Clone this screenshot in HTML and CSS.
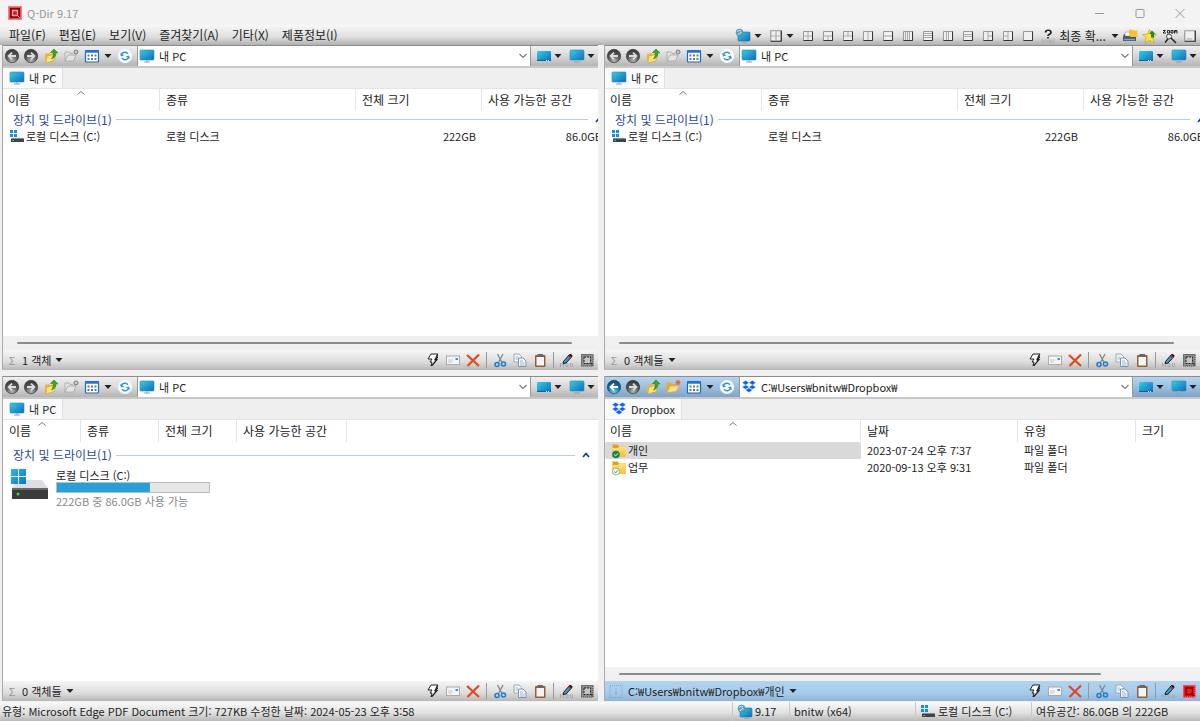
FILE: index.html
```
<!DOCTYPE html>
<html lang="ko">
<head>
<meta charset="utf-8">
<title>Q-Dir 9.17</title>
<link rel="stylesheet" href="styles.css">
</head>
<body>
<svg class="sprite" aria-hidden="true">
  <defs>
    <linearGradient id="gScreen" x1="0" y1="0" x2="1" y2="1"><stop offset="0" stop-color="#35d0e0"/><stop offset="1" stop-color="#0b6cc4"/></linearGradient>
    <radialGradient id="gBall" cx=".5" cy=".85" r=".9"><stop offset="0" stop-color="#b5b5b5"/><stop offset=".5" stop-color="#555"/><stop offset="1" stop-color="#333"/></radialGradient>
    <radialGradient id="gBallBlue" cx=".5" cy=".85" r=".9"><stop offset="0" stop-color="#6fd0f5"/><stop offset=".5" stop-color="#1f6f9f"/><stop offset="1" stop-color="#1c3a58"/></radialGradient>
    <linearGradient id="gWin" x1="0" y1="0" x2="1" y2="1"><stop offset="0" stop-color="#2fb4ee"/><stop offset="1" stop-color="#0a78d0"/></linearGradient>
    <linearGradient id="gFolder" x1="0" y1="0" x2="0" y2="1"><stop offset="0" stop-color="#ffe08a"/><stop offset="1" stop-color="#fbc02d"/></linearGradient>
  </defs>
  <symbol id="monitor" viewBox="0 0 16 16"><rect x="1" y="2" width="14" height="10" rx="1" fill="url(#gScreen)" stroke="#2d87a8" stroke-width=".6"/><path d="M7 12.3h2v1.4H7z" fill="#aab6bd"/><path d="M5 14h6" stroke="#8da0ab"/></symbol>
  <symbol id="desk" viewBox="0 0 16 16"><rect x="1" y="3" width="14" height="10" rx="1" fill="url(#gScreen)"/><path d="M1 12.5h14" stroke="#145e99"/><path d="M10 12.5h4" stroke="#cfe" stroke-dasharray="1 1"/></symbol>
  <symbol id="qmon" viewBox="0 0 16 16"><rect x="3" y="4" width="12" height="9" rx="1" fill="url(#gScreen)" stroke="#256f98" stroke-width=".6"/><path d="M7 14.5h5" stroke="#9aa"/><circle cx="4.500" cy="4.500" r="3.500" fill="#5aa7cc" stroke="#3d7d9e" stroke-width=".5"/><path d="M2 3.500c2-2 3 0 4-1M3 7c0-2 3-1 3-3" stroke="#d5edf7" fill="none"/></symbol>
  <symbol id="back" viewBox="0 0 16 16"><circle cx="8" cy="8" r="6.700" fill="url(#gBall)" stroke="#333" stroke-width=".6"/><path d="M12 8H5M8 4.700 4.600 8 8 11.300" stroke="#ddd" stroke-width="1.800" fill="none"/></symbol>
  <symbol id="backblue" viewBox="0 0 16 16"><circle cx="8" cy="8" r="6.700" fill="url(#gBallBlue)" stroke="#1c3a58" stroke-width=".6"/><path d="M12 8H5M8 4.700 4.600 8 8 11.300" stroke="#fff" stroke-width="1.800" fill="none"/></symbol>
  <symbol id="fwd" viewBox="0 0 16 16"><circle cx="8" cy="8" r="6.700" fill="url(#gBall)" stroke="#333" stroke-width=".6"/><path d="M4 8h7M8 4.700 11.400 8 8 11.300" stroke="#ddd" stroke-width="1.800" fill="none"/></symbol>
  <symbol id="up" viewBox="0 0 16 16"><path d="M2 6l4-1 1 1 5-1v7l-8 3-2-1z" fill="#e9b93a"/><path d="M4 8l9-2-2 6.500L3 15z" fill="#ffe37a" stroke="#c89a28" stroke-width=".5"/><path d="M8.500 11c1.500-2 2-4 1.800-6.500H7.500L11 1l4 4-2.200-.2c.2 3-1 5-4.300 6.200z" fill="#3da51e" stroke="#1f7010" stroke-width=".5"/></symbol>
  <symbol id="newfolder" viewBox="0 0 16 16"><path d="M2 13V4h4l1 1.500h3M2 13l3-6h8l-2.500 6z" fill="#e4e4e4" stroke="#aaa" stroke-width=".9"/><circle cx="13" cy="4" r="2" fill="#ccc" stroke="#777"/></symbol>
  <symbol id="newfoldercolor" viewBox="0 0 16 16"><path d="M1.500 13V3.500h4L7 5h4v2z" fill="#e4ab31"/><path d="M2 13.500 5 7h9l-3 5.500z" fill="#ffe184" stroke="#d9a436" stroke-width=".6"/><path d="M13 1v5M10.500 3.500h5M11.200 1.700l3.600 3.600M14.800 1.700l-3.600 3.600" stroke="#ed6331" stroke-width="1.200"/></symbol>
  <symbol id="views" viewBox="0 0 16 16"><rect x="1.500" y="2.500" width="13" height="11.500" rx="1" fill="#fff" stroke="#1b68bd" stroke-width="1.200"/><path d="M1 3.500h14" stroke="#2277d2" stroke-width="2.500"/><g stroke-width="2" stroke-dasharray="2 1.500"><path d="M4.500 6.500v7" stroke="#477fbd"/><path d="M8 6.500v7" stroke="#9a5b89"/><path d="M11.500 6.500v7" stroke="#3c9a65"/></g></symbol>
  <symbol id="refresh" viewBox="0 0 16 16"><circle cx="8" cy="8" r="7" fill="#fafcff"/><path d="M4.300 7C5 4 9 3.200 11 5.700M11.700 9C11 12 7 12.800 5 10.300" fill="none" stroke="#2e93dc" stroke-width="1.400"/><path d="M3 5l1 3.500L7.200 7.500zM13 11l-1-3.500L8.800 8.500z" fill="#2e93dc"/></symbol>
  <symbol id="caret" viewBox="0 0 8 6"><path d="M.5 1h7L4 5z" fill="#222"/></symbol>
  <symbol id="chev" viewBox="0 0 10 8"><path d="M1.500 2 5 5.500 8.500 2" fill="none" stroke="#777" stroke-width="1.100"/></symbol>
  <symbol id="sort" viewBox="0 0 10 6"><path d="M1.500 4.500 5 1.500l3.500 3" fill="none" stroke="#777"/></symbol>
  <symbol id="collapse" viewBox="0 0 8 6"><path d="M1 5 4 1.500 7 5" fill="none" stroke="#123a9c" stroke-width="1.700"/></symbol>
  <symbol id="drive" viewBox="0 0 16 16"><path d="M1 1h3v3H1zM5 1h3v3H5zM1 5h3v3H1zM5 5h3v3H5z" fill="#1192de"/><path d="M4 8.500h9.500l1 1.500H3z" fill="#d4d7da"/><path d="M2 9.500h13v3.500H2z" fill="#3e4347"/><path d="M3.500 11.500H5" stroke="#4fe04f"/></symbol>
  <symbol id="bigdrive" viewBox="0 0 38 32"><path d="M8 12h23l6 8H1z" fill="#dcdee1"/><path d="M1 20h36v11H1z" fill="#3b3b3b"/><path d="M1 20h36v2H1z" fill="#686868"/><circle cx="7" cy="26" r="1.500" fill="#35e035"/><path d="M0 1h7v7H0zM8 1h7v7H8zM0 9h7v7H0zM8 9h7v7H8z" fill="url(#gWin)"/></symbol>
  <symbol id="bolt" viewBox="0 0 16 16"><path d="M6 2h7l-2 3h2l-3 3h2l-6 6 1-4H5l2-3H3z" fill="#fff" stroke="#222" stroke-linejoin="round"/><path d="M12.500 3 10 7.500h2L7 13.500" fill="none" stroke="#222" stroke-width="1.300"/></symbol>
  <symbol id="mail" viewBox="0 0 16 16"><rect x="1.500" y="4" width="13" height="8.500" fill="#f5f5f5" stroke="#aaa"/><path d="M3 8h5M3 10h4" stroke="#bbb" stroke-width=".8"/><path d="M10.500 7h2.500" stroke="#3b8fdc" stroke-width="2"/></symbol>
  <symbol id="del" viewBox="0 0 16 16"><path d="M2 3l12 11M14 2.500 2.500 14" stroke="#dd4a22" stroke-width="2.200"/></symbol>
  <symbol id="cut" viewBox="0 0 16 16"><path d="M5.500 2 10 10.500M11 2 6.500 10.500" stroke="#7d8994" stroke-width="1.300"/><circle cx="5" cy="12.500" r="2" fill="none" stroke="#1e7fd0" stroke-width="1.600"/><circle cx="11.500" cy="12" r="2" fill="none" stroke="#1e7fd0" stroke-width="1.600"/></symbol>
  <symbol id="copy" viewBox="0 0 16 16"><path d="M2 2h5l2.500 2.500V10H2z" fill="#f5f8fb" stroke="#98a8b8"/><path d="M6.500 6H11l3 3v5.500H6.500z" fill="#f5f8fb" stroke="#8193a8"/><path d="M8 9h3M8 11h4.500M8 13h4.500M3.500 5H6M3.500 7H6" stroke="#7ea6cf" stroke-width=".8"/></symbol>
  <symbol id="paste" viewBox="0 0 16 16"><rect x="3" y="3" width="10.500" height="12" rx="1" fill="#94602f"/><path d="M4.500 5h7.500v8.500H4.500z" fill="#f4f4f4"/><path d="M5.500 2h5.500v2.500H5.500z" fill="#62686e"/></symbol>
  <symbol id="pen" viewBox="0 0 16 16"><path d="M1.500 11v4M1.500 13h3M4.500 11v4M7 11.500h2v3H7zM11.500 11v3.500h2V11" stroke="#aaa" fill="none"/><path d="M4.500 9.500 10.500 2.500l2.500 2L7 11l-3 .5z" fill="#3aa0c8" stroke="#151515"/><path d="M10 4 12 5.500" stroke="#e12222" stroke-width="2.400"/><path d="m11 2.500 2 1.700" stroke="#151515" stroke-width="1.800"/></symbol>
  <symbol id="sel" viewBox="0 0 16 16"><rect x="2" y="2" width="12.500" height="12.500" fill="#8c8c8c"/><rect x="2.500" y="2.500" width="11.500" height="11.500" fill="none" stroke="#555" stroke-dasharray="1 1"/><rect x="5" y="5" width="6.500" height="6.500" fill="#c5c5c5" stroke="#222" stroke-dasharray="2 1"/><path d="M11 11h2.500v2.500z" fill="#333"/></symbol>
  <symbol id="selred" viewBox="0 0 16 16"><rect x="2" y="2" width="12.500" height="12.500" fill="#f51616"/><rect x="2.500" y="2.500" width="11.500" height="11.500" fill="none" stroke="#ff7a7a" stroke-dasharray="1 1"/><path d="M5 5h6.500v6.500H5zM10 10l3 3" fill="none" stroke="#7a0000" stroke-width="1.300"/></symbol>
  <symbol id="app" viewBox="0 0 14 14"><rect x=".5" y=".5" width="13" height="13" fill="#f24a4a" stroke="#e88" /><rect x="2" y="2" width="10" height="10" fill="#7c0c14"/><path d="M4.500 4.500h5v5h-5z" fill="#c8202a" stroke="#f99" stroke-width="1.300"/><path d="m9 9 3 3" stroke="#f99"/></symbol>
  <symbol id="dropbox" viewBox="0 0 16 16"><path d="M4.600 1.500 8 3.700 4.600 5.900 1.200 3.700zM11.400 1.500l3.400 2.200-3.400 2.200L8 3.700zM4.600 5.900 8 8.100l-3.400 2.200-3.400-2.200zM11.400 5.900l3.400 2.200-3.400 2.200L8 8.100zM4.600 11.100 8 8.900l3.400 2.200L8 13.500z" fill="#0f62f5" stroke="#fafafa" stroke-width=".2"/></symbol>
  <symbol id="folderok" viewBox="0 0 16 16"><path d="M1.500 1.500h5l1.500 2h7V14h-13.500z" fill="#e9a20c"/><path d="M1.500 5h5.500l1.500-1.500H15V14H1.500z" fill="url(#gFolder)"/><circle cx="5" cy="11.500" r="3.800" fill="#0f8a4a"/><path d="m3.200 11.500 1.400 1.400 2.300-2.500" fill="none" stroke="#fff"/></symbol>
  <symbol id="foldersync" viewBox="0 0 16 16"><path d="M1.500 1.500h5l1.500 2h7V14h-13.500z" fill="#e9a20c"/><path d="M1.500 5h5.500l1.500-1.500H15V14H1.500z" fill="url(#gFolder)"/><circle cx="5" cy="11.500" r="3.500" fill="#fff" stroke="#5cb585" stroke-width=".8"/><path d="m3.200 11.500 1.400 1.400 2.300-2.500" fill="none" stroke="#0f8a4a"/></symbol>
  <symbol id="box" viewBox="0 0 12 12"><path d="M1.500 1.500h9v9h-9z" fill="#f0f0f0" stroke="#999"/><path d="M10.500 1.500v9H1.500" fill="none" stroke="#333"/></symbol>
  <symbol id="inet" viewBox="0 0 16 16"><path d="M5.500 4.500c0-3 5.500-3 5.500 0 0 2-3 1.500-3 3.500M8 9v1.500" fill="none" stroke="#222" stroke-width="1.700"/><path d="M2 11v4M4 15v-3h3v3M9 13.500h3V12H9v2.500h3M14 10v5" fill="none" stroke="#aaa" stroke-width=".8"/></symbol>
  <symbol id="printer" viewBox="0 0 16 16"><path d="M2 6h10l2 3v4H1V9z" fill="#4a5660"/><path d="M3 4h8v4H3z" fill="#f6f6f6" stroke="#888" stroke-width=".5"/><path d="M2 11.500h11" stroke="#6db0dd" stroke-width="1.500"/><path d="M7 1.500h3l1 1h4.500V9H8.500L7 7z" fill="#f7c232"/></symbol>
  <symbol id="star" viewBox="0 0 16 16"><path d="m7.500 1.500 2 4.500 5 .5-3.700 3.300L12 15l-4.500-2.700L3 15l1.200-5.200L.5 6.500l5-.5z" fill="#ffe23a" stroke="#b99a15" stroke-width=".6"/><path d="M10 2.500 13.500 6H12v3.500H9V6H7z" fill="#238a25"/></symbol>
  <symbol id="zoomtool" viewBox="0 0 16 16"><path d="M1 2.500h2.500L1 5h3M5.500 2.500h2V5h-2zM9 2.500h2V5H9zM12.500 5.500v-3H15v3M13.800 2.500v2" fill="none" stroke="#222"/><circle cx="7" cy="8.500" r="2.500" fill="#eee" stroke="#444"/><path d="m9 10 5 5M6 11l-3 3.500" stroke="#222" stroke-width="1.500"/></symbol>
  <symbol id="info" viewBox="0 0 16 16"><rect x="2" y="2.500" width="12" height="12" fill="none" stroke="#7fa6c8" stroke-dasharray="1 1"/><path d="M8 5v1M8 7.500V12" stroke="#7fa6c8"/></symbol>
</svg>

<header class="titlebar">
  <svg class="app"><use href="#app"/></svg>
  <h1>Q-Dir 9.17</h1>
  <div class="winbtns">
    <button aria-label="최소화"><svg viewBox="0 0 12 12"><path d="M1 6.500h9"/></svg></button>
    <button aria-label="최대화"><svg viewBox="0 0 12 12"><rect x="2" y="2.500" width="8" height="8" rx="1"/></svg></button>
    <button aria-label="닫기"><svg viewBox="0 0 12 12"><path d="m1.500 2 9 9M10.500 2l-9 9"/></svg></button>
  </div>
</header>

<div class="menubar">
  <nav class="menu">
    <button>파일(F)</button><button>편집(E)</button><button>보기(V)</button><button>즐겨찾기(A)</button><button>기타(X)</button><button>제품정보(I)</button>
  </nav>
  <div class="tools">
    <button class="drop" aria-label="바탕 화면"><svg><use href="#qmon"/></svg><svg class="caret"><use href="#caret"/></svg></button>
    <button class="drop" aria-label="배치 선택"><svg class="mid" viewBox="0 0 12 12"><use href="#box"/><path d="M6 2v8M2 6h8"/></svg><svg class="caret"><use href="#caret"/></svg></button>
    <button aria-label="배치 1"><svg class="small" viewBox="0 0 12 12"><use href="#box"/><path d="M6 2v8M2 6h8"/></svg></button>
    <button aria-label="배치 2"><svg class="small" viewBox="0 0 12 12"><use href="#box"/><path d="M2 6h8M6 6v4"/></svg></button>
    <button aria-label="배치 3"><svg class="small" viewBox="0 0 12 12"><use href="#box"/><path d="M2 6h8M6 2v4"/></svg></button>
    <button aria-label="배치 4"><svg class="small" viewBox="0 0 12 12"><use href="#box"/><path d="M6 2v8"/></svg></button>
    <button aria-label="배치 5"><svg class="small" viewBox="0 0 12 12"><use href="#box"/><path d="M2 6h8"/></svg></button>
    <button aria-label="배치 6"><svg class="small" viewBox="0 0 12 12"><use href="#box"/><path d="M3.500 2v8M5.500 2v8M7.500 2v8"/></svg></button>
    <button aria-label="배치 7"><svg class="small" viewBox="0 0 12 12"><use href="#box"/><path d="M2 3.500h8M2 5.500h8M2 7.500h8"/></svg></button>
    <button aria-label="배치 8"><svg class="small" viewBox="0 0 12 12"><use href="#box"/><path d="M4.500 2v8M6.500 2v8"/></svg></button>
    <button aria-label="배치 9"><svg class="small" viewBox="0 0 12 12"><use href="#box"/><path d="M2 4.500h8M2 6.500h8"/></svg></button>
    <button aria-label="배치 10"><svg class="small" viewBox="0 0 12 12"><use href="#box"/><path d="M6 2v8M6 6h4"/></svg></button>
    <button aria-label="배치 11"><svg class="small" viewBox="0 0 12 12"><use href="#box"/><path d="M6 2v8M2 6h4"/></svg></button>
    <button aria-label="배치 12"><svg class="small" viewBox="0 0 12 12"><use href="#box"/></svg></button>
    <button aria-label="인터넷"><svg><use href="#inet"/></svg></button>
    <button class="last">최종 확...<svg class="caret"><use href="#caret"/></svg></button>
    <button aria-label="인쇄"><svg><use href="#printer"/></svg></button>
    <button aria-label="즐겨찾기 추가"><svg><use href="#star"/></svg></button>
    <button aria-label="확대"><svg><use href="#zoomtool"/></svg></button>
    <button aria-label="최소 창"><svg class="mid" viewBox="0 0 12 12"><use href="#box"/><path d="M3 8.500h5"/></svg></button>
  </div>
</div>

<main class="panes">
  <section class="pane">
    <div class="toolbar">
      <button aria-label="뒤로"><svg><use href="#back"/></svg></button><button aria-label="앞으로"><svg><use href="#fwd"/></svg></button><button aria-label="위로"><svg><use href="#up"/></svg></button><button aria-label="새 폴더"><svg><use href="#newfolder"/></svg></button>
      <button class="view" aria-label="보기"><svg><use href="#views"/></svg><svg class="caret"><use href="#caret"/></svg></button><button aria-label="새로 고침"><svg><use href="#refresh"/></svg></button>
      <div class="address"><svg><use href="#monitor"/></svg><input value="내 PC" aria-label="주소"><button aria-label="주소 목록"><svg class="chev"><use href="#chev"/></svg></button></div>
      <div class="right"><button aria-label="바탕 화면"><svg><use href="#desk"/></svg><svg class="caret"><use href="#caret"/></svg></button><button aria-label="컴퓨터"><svg><use href="#monitor"/></svg><svg class="caret"><use href="#caret"/></svg></button></div>
    </div>
    <div class="tabs"><button><svg><use href="#monitor"/></svg>내 PC</button></div>
    <div class="content">
      <table class="drives">
        <colgroup><col class="c-name"><col class="c-kind"><col class="c-size"><col></colgroup>
        <thead><tr><th>이름<svg class="sort"><use href="#sort"/></svg></th><th>종류</th><th>전체 크기</th><th>사용 가능한 공간</th></tr></thead>
        <tbody>
          <tr><td colspan="4"><div class="group"><span>장치 및 드라이브(1)</span><svg class="caret"><use href="#collapse"/></svg></div></td></tr>
          <tr><td><div class="item"><svg><use href="#drive"/></svg>로컬 디스크 (C:)</div></td><td>로컬 디스크</td><td class="num">222GB</td><td class="num">86.0GB</td></tr>
        </tbody>
      </table>
    </div>
    <div class="hscroll"><span></span></div>
    <footer class="statusline">
      <button class="count"><span class="sigma">Σ</span>1 객체<svg class="caret"><use href="#caret"/></svg></button>
      <button aria-label="빠른 실행"><svg><use href="#bolt"/></svg></button><button aria-label="메일"><svg><use href="#mail"/></svg></button><button aria-label="삭제"><svg><use href="#del"/></svg></button><i></i>
      <button aria-label="잘라내기"><svg><use href="#cut"/></svg></button><button aria-label="복사"><svg><use href="#copy"/></svg></button><button aria-label="붙여넣기"><svg><use href="#paste"/></svg></button><i></i>
      <button aria-label="이름 바꾸기"><svg><use href="#pen"/></svg></button><button aria-label="선택"><svg><use href="#sel"/></svg></button>
    </footer>
  </section>

  <section class="pane">
    <div class="toolbar">
      <button aria-label="뒤로"><svg><use href="#back"/></svg></button><button aria-label="앞으로"><svg><use href="#fwd"/></svg></button><button aria-label="위로"><svg><use href="#up"/></svg></button><button aria-label="새 폴더"><svg><use href="#newfolder"/></svg></button>
      <button class="view" aria-label="보기"><svg><use href="#views"/></svg><svg class="caret"><use href="#caret"/></svg></button><button aria-label="새로 고침"><svg><use href="#refresh"/></svg></button>
      <div class="address"><svg><use href="#monitor"/></svg><input value="내 PC" aria-label="주소"><button aria-label="주소 목록"><svg class="chev"><use href="#chev"/></svg></button></div>
      <div class="right"><button aria-label="바탕 화면"><svg><use href="#desk"/></svg><svg class="caret"><use href="#caret"/></svg></button><button aria-label="컴퓨터"><svg><use href="#monitor"/></svg><svg class="caret"><use href="#caret"/></svg></button></div>
    </div>
    <div class="tabs"><button><svg><use href="#monitor"/></svg>내 PC</button></div>
    <div class="content">
      <table class="drives">
        <colgroup><col class="c-name"><col class="c-kind"><col class="c-size"><col></colgroup>
        <thead><tr><th>이름<svg class="sort"><use href="#sort"/></svg></th><th>종류</th><th>전체 크기</th><th>사용 가능한 공간</th></tr></thead>
        <tbody>
          <tr><td colspan="4"><div class="group"><span>장치 및 드라이브(1)</span><svg class="caret"><use href="#collapse"/></svg></div></td></tr>
          <tr><td><div class="item"><svg><use href="#drive"/></svg>로컬 디스크 (C:)</div></td><td>로컬 디스크</td><td class="num">222GB</td><td class="num">86.0GB</td></tr>
        </tbody>
      </table>
    </div>
    <div class="hscroll"><span></span></div>
    <footer class="statusline">
      <button class="count"><span class="sigma">Σ</span>0 객체들<svg class="caret"><use href="#caret"/></svg></button>
      <button aria-label="빠른 실행"><svg><use href="#bolt"/></svg></button><button aria-label="메일"><svg><use href="#mail"/></svg></button><button aria-label="삭제"><svg><use href="#del"/></svg></button><i></i>
      <button aria-label="잘라내기"><svg><use href="#cut"/></svg></button><button aria-label="복사"><svg><use href="#copy"/></svg></button><button aria-label="붙여넣기"><svg><use href="#paste"/></svg></button><i></i>
      <button aria-label="이름 바꾸기"><svg><use href="#pen"/></svg></button><button aria-label="선택"><svg><use href="#sel"/></svg></button>
    </footer>
  </section>

  <section class="pane">
    <div class="toolbar">
      <button aria-label="뒤로"><svg><use href="#back"/></svg></button><button aria-label="앞으로"><svg><use href="#fwd"/></svg></button><button aria-label="위로"><svg><use href="#up"/></svg></button><button aria-label="새 폴더"><svg><use href="#newfolder"/></svg></button>
      <button class="view" aria-label="보기"><svg><use href="#views"/></svg><svg class="caret"><use href="#caret"/></svg></button><button aria-label="새로 고침"><svg><use href="#refresh"/></svg></button>
      <div class="address"><svg><use href="#monitor"/></svg><input value="내 PC" aria-label="주소"><button aria-label="주소 목록"><svg class="chev"><use href="#chev"/></svg></button></div>
      <div class="right"><button aria-label="바탕 화면"><svg><use href="#desk"/></svg><svg class="caret"><use href="#caret"/></svg></button><button aria-label="컴퓨터"><svg><use href="#monitor"/></svg><svg class="caret"><use href="#caret"/></svg></button></div>
    </div>
    <div class="tabs"><button><svg><use href="#monitor"/></svg>내 PC</button></div>
    <div class="content">
      <div class="tilehead"><button>이름<svg class="sort"><use href="#sort"/></svg></button><button>종류</button><button>전체 크기</button><button class="wide">사용 가능한 공간</button></div>
      <div class="group tall"><span>장치 및 드라이브(1)</span><svg class="caret"><use href="#collapse"/></svg></div>
      <div class="tile">
        <svg class="bigdrive"><use href="#bigdrive"/></svg>
        <div class="tileinfo">
          <span>로컬 디스크 (C:)</span>
          <div class="bar"><span style="width:61%"></span></div>
          <span class="free">222GB 중 86.0GB 사용 가능</span>
        </div>
      </div>
    </div>
    <footer class="statusline">
      <button class="count"><span class="sigma">Σ</span>0 객체들<svg class="caret"><use href="#caret"/></svg></button>
      <button aria-label="빠른 실행"><svg><use href="#bolt"/></svg></button><button aria-label="메일"><svg><use href="#mail"/></svg></button><button aria-label="삭제"><svg><use href="#del"/></svg></button><i></i>
      <button aria-label="잘라내기"><svg><use href="#cut"/></svg></button><button aria-label="복사"><svg><use href="#copy"/></svg></button><button aria-label="붙여넣기"><svg><use href="#paste"/></svg></button><i></i>
      <button aria-label="이름 바꾸기"><svg><use href="#pen"/></svg></button><button aria-label="선택"><svg><use href="#sel"/></svg></button>
    </footer>
  </section>

  <section class="pane active">
    <div class="toolbar">
      <button aria-label="뒤로"><svg><use href="#backblue"/></svg></button><button aria-label="앞으로"><svg><use href="#fwd"/></svg></button><button aria-label="위로"><svg><use href="#up"/></svg></button><button aria-label="새 폴더"><svg><use href="#newfoldercolor"/></svg></button>
      <button class="view" aria-label="보기"><svg><use href="#views"/></svg><svg class="caret"><use href="#caret"/></svg></button><button aria-label="새로 고침"><svg><use href="#refresh"/></svg></button>
      <div class="address"><svg><use href="#dropbox"/></svg><input value="C:₩Users₩bnitw₩Dropbox₩" aria-label="주소"><button aria-label="주소 목록"><svg class="chev"><use href="#chev"/></svg></button></div>
      <div class="right"><button aria-label="바탕 화면"><svg><use href="#desk"/></svg><svg class="caret"><use href="#caret"/></svg></button><button aria-label="컴퓨터"><svg><use href="#monitor"/></svg><svg class="caret"><use href="#caret"/></svg></button></div>
    </div>
    <div class="tabs"><button><svg><use href="#dropbox"/></svg>Dropbox</button></div>
    <div class="content">
      <table class="files">
        <colgroup><col class="c-file"><col class="c-date"><col class="c-type"><col></colgroup>
        <thead><tr><th>이름<svg class="sort"><use href="#sort"/></svg></th><th>날짜</th><th>유형</th><th>크기</th></tr></thead>
        <tbody>
          <tr><td><div class="item selected"><svg><use href="#folderok"/></svg>개인</div></td><td>2023-07-24 오후 7:37</td><td>파일 폴더</td><td></td></tr>
          <tr><td><div class="item"><svg><use href="#foldersync"/></svg>업무</div></td><td>2020-09-13 오후 9:31</td><td>파일 폴더</td><td></td></tr>
        </tbody>
      </table>
    </div>
    <div class="hscroll short"><span></span></div>
    <footer class="statusline">
      <button class="count"><svg><use href="#info"/></svg>C:₩Users₩bnitw₩Dropbox₩개인<svg class="caret"><use href="#caret"/></svg></button>
      <button aria-label="빠른 실행"><svg><use href="#bolt"/></svg></button><button aria-label="메일"><svg><use href="#mail"/></svg></button><button aria-label="삭제"><svg><use href="#del"/></svg></button><i></i>
      <button aria-label="잘라내기"><svg><use href="#cut"/></svg></button><button aria-label="복사"><svg><use href="#copy"/></svg></button><button aria-label="붙여넣기"><svg><use href="#paste"/></svg></button><i></i>
      <button aria-label="이름 바꾸기"><svg><use href="#pen"/></svg></button><button aria-label="선택"><svg><use href="#selred"/></svg></button>
    </footer>
  </section>
</main>

<footer class="statusbar">
  <span class="grow">유형: Microsoft Edge PDF Document 크기: 727KB 수정한 날짜: 2024-05-23 오후 3:58</span>
  <span class="s-ver"><svg><use href="#qmon"/></svg>9.17</span>
  <span class="s-user">bnitw (x64)</span>
  <span class="s-disk"><svg><use href="#drive"/></svg>로컬 디스크 (C:)</span>
  <span class="s-free">여유공간: 86.0GB 의 222GB</span>
</footer>
</body>
</html>
```

FILE: styles.css
```
* { box-sizing: border-box; }
body {
  margin: 0;
  min-height: 100vh;
  display: flex;
  flex-direction: column;
  background: #f0f0f0;
  color: #222;
  font: 11px/16px "Noto Sans CJK KR", sans-serif;
}
button, input { font: inherit; color: inherit; margin: 0; padding: 0; border: 0; background: none; }
button { display: flex; align-items: center; justify-content: center; white-space: nowrap; }
svg { width: 16px; height: 16px; flex: none; display: block; }
.sprite { position: absolute; width: 0; height: 0; }
svg.caret { width: 8px; height: 6px; }
svg.small { width: 12px; height: 12px; }
svg.mid { width: 14px; height: 14px; }
svg.chev { width: 10px; height: 8px; }
.tools svg > path { fill: none; stroke: #aaa; }

.titlebar { display: flex; align-items: center; height: 25px; padding-left: 8px; background: #f3f3f3; color: #999; }
.titlebar .app { width: 14px; height: 14px; }
.titlebar h1 { flex: 1; margin: 0 0 0 5px; font-size: 11px; font-weight: 400; }
.winbtns { display: flex; }
.winbtns button { width: 40px; height: 24px; }
.winbtns svg { width: 12px; height: 12px; fill: none; stroke: #999; }

.menubar { display: flex; justify-content: space-between; height: 20px; padding-left: 9px; background: linear-gradient(#f8f8f8, #dedede 60%, #b0b0b0); font-size: 12px; }
.menu { display: flex; gap: 13px; }
.tools { display: flex; padding-top: 1px; }
.tools button { width: 20px; }
.tools .drop { width: 33px; gap: 3px; }
.tools .last { width: 62px; gap: 5px; }

.panes { flex: 1; display: grid; grid-template-columns: minmax(0, 1fr) minmax(0, 1fr); grid-template-rows: 1fr 1fr; gap: 6px 7px; padding: 0 0 1px 3px; }
.pane { display: flex; flex-direction: column; min-width: 0; background: #fff; box-shadow: -1px 0 #aaa; }
.toolbar { display: flex; height: 23px; border-top: 1px solid #8c8c8c; border-bottom: 2px solid #c8c8c8; background: linear-gradient(#f0f0f0, #d8d8d8 50%, #b4b4b4); }
.toolbar > button { width: 20px; }
.toolbar > button:first-child { width: 18px; }
.toolbar .view { width: 34px; gap: 4px; }
.address { flex: 1; display: flex; align-items: center; gap: 4px; min-width: 0; margin-left: 2px; padding-left: 1px; background: #fff; border: 1px solid #999; border-width: 0 1px; }
.address input { flex: 1; min-width: 0; height: 18px; outline: 0; }
.address button { width: 14px; }
.right { display: flex; width: 67px; gap: 7px; padding-left: 5px; overflow: hidden; }
.right button { gap: 2px; flex: none; }

.tabs { display: flex; height: 21px; background: #efefef; border-bottom: 1px solid #e4e4e4; }
.tabs button { padding: 0 6px; gap: 4px; background: #fafafa; border-right: 1px solid #e0e0e0; }

.content { flex: 1; overflow: hidden; }
table { table-layout: fixed; border-collapse: separate; border-spacing: 0; }
.drives { width: 605px; }
.files { width: 100%; }
.c-name { width: 157px; }
.c-kind { width: 196px; }
.c-size { width: 126px; }
.c-file { width: 256px; }
.c-date { width: 157px; }
.c-type { width: 118px; }
th, td { padding: 0 6px; text-align: left; font-weight: 400; white-space: nowrap; }
th { position: relative; height: 22px; border-right: 1px solid #e5e5e5; }
th, .tilehead, .group { font-size: 12px; }
th:last-child { border-right: 0; }
td { height: 17px; line-height: 17px; }
td:first-child { padding: 0; }
td.num { text-align: right; }
.sort { position: absolute; top: 1px; left: calc(50% - 5px); width: 10px; height: 6px; }
.item { display: flex; align-items: center; gap: 1px; padding-left: 6px; height: 17px; }
.selected { background: #d9d9d9; border-radius: 2px; }
.files th:first-child, .drives th:first-child { padding-left: 5px; }
.group { display: flex; align-items: center; gap: 4px; height: 17px; padding: 0 5px 0 10px; color: #2c4a9a; }
.group::after { content: ""; order: 1; flex: 1; height: 1px; background: #bccbe4; }
.group .caret { order: 2; margin-left: 3px; }
.tall { height: 26px; padding-right: 8px; }
.tilehead { display: flex; height: 22px; }
.tilehead button { position: relative; width: 78px; padding-left: 6px; justify-content: flex-start; border-right: 1px solid #e5e5e5; }
.tilehead .wide { width: 110px; }
.tile { display: flex; gap: 7px; padding-left: 8px; }
.bigdrive { width: 38px; height: 32px; }
.tileinfo { display: flex; flex-direction: column; line-height: 14px; }
.bar { width: 154px; height: 11px; margin-bottom: 1px; border: 1px solid #bcbcbc; background: #e6e6e6; }
.bar span { display: block; height: 100%; background: #26a0da; }
.free { color: #888; }

.hscroll { height: 14px; padding: 6px 26px 0 14px; background: #f0f0f0; }
.hscroll span { display: block; height: 2px; border-radius: 1px; background: #8c8c8c; }
.short { padding-right: 99px; }
.statusline { display: flex; align-items: center; height: 20px; padding-right: 1px; background: linear-gradient(#f6f6f6, #dcdcdc 60%, #b8b8b8); }
.statusline button { width: 20px; }
.statusline .count { width: auto; gap: 4px; margin-right: auto; padding-left: 3px; }
.statusline i { width: 1px; height: 16px; margin: 0 3px; background: #999; }
.sigma { width: 12px; color: #999; }

.active .toolbar { background: linear-gradient(#b4d4ef, #9dbfdf 50%, #7fa3c6); }
.active .statusline { background: linear-gradient(#b2d3ef, #a6cbea 60%, #8fb4d6); }

.statusbar { display: flex; height: 19px; line-height: 19px; background: linear-gradient(#fafafa, #dedede 60%, #b8b8b8); white-space: nowrap; }
.statusbar span { display: flex; align-items: center; gap: 2px; padding-left: 4px; border-left: 1px solid #c8c8c8; }
.statusbar .grow { flex: 1; padding-left: 2px; border-left: 0; }
.statusbar .s-ver { width: 57px; }
.statusbar .s-user { width: 126px; }
.statusbar .s-disk { width: 116px; }
.statusbar .s-free { width: 169px; }
```
